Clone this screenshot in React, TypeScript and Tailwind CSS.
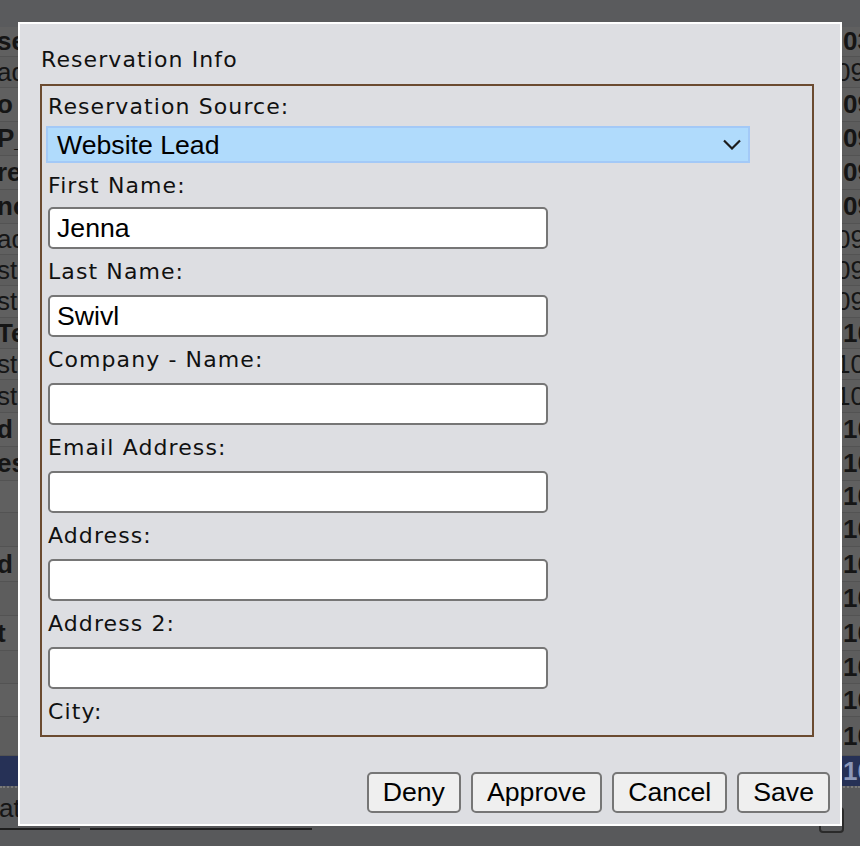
import React from "react";

type Row = { h: string; l: string; r: string; b: boolean };

const rows: Row[] = [
  { h: "h-[30px]", l: "se", r: "03/28/2025", b: true },
  { h: "h-[31px]", l: "ade", r: "09/04/2025", b: false },
  { h: "h-[34px]", l: "o", r: "09/12/2025", b: true },
  { h: "h-[34px]", l: "P_", r: "09/12/2025", b: true },
  { h: "h-[34px]", l: "re", r: "09/15/2025", b: true },
  { h: "h-[34px]", l: "nc", r: "09/18/2025", b: true },
  { h: "h-[31px]", l: "ad", r: "09/24/2025", b: false },
  { h: "h-[31px]", l: "st1", r: "09/24/2025", b: false },
  { h: "h-[32px]", l: "st1", r: "09/29/2025", b: false },
  { h: "h-[31px]", l: "Te", r: "10/01/2025", b: true },
  { h: "h-[31px]", l: "st1", r: "10/04/2025", b: false },
  { h: "h-[33px]", l: "st1", r: "10/04/2025", b: false },
  { h: "h-[34px]", l: "d", r: "10/06/2025", b: true },
  { h: "h-[34px]", l: "es", r: "10/07/2025", b: true },
  { h: "h-[32px]", l: "", r: "10/08/2025", b: true },
  { h: "h-[34px]", l: "", r: "10/09/2025", b: true },
  { h: "h-[35px]", l: "d", r: "10/10/2025", b: true },
  { h: "h-[34px]", l: "", r: "10/13/2025", b: true },
  { h: "h-[35px]", l: "t", r: "10/14/2025", b: true },
  { h: "h-[33px]", l: "", r: "10/15/2025", b: true },
  { h: "h-[33px]", l: "", r: "10/16/2025", b: true },
  { h: "h-[39px]", l: "", r: "10/17/2025", b: true },
];

const fields = [
  { label: "First Name:", value: "Jenna" },
  { label: "Last Name:", value: "Swivl" },
  { label: "Company - Name:", value: "" },
  { label: "Email Address:", value: "" },
  { label: "Address:", value: "" },
  { label: "Address 2:", value: "" },
  { label: "City:", value: "" },
];

function Background() {
  return (
    <div className="flex flex-col font-['Liberation_Sans',Arial,sans-serif] text-[26px] text-[#151515]">
      <div className="h-[27px]" />
      {rows.map((row, i) => (
        <div
          key={i}
          className={`${row.h} flex items-center border-b border-[#535353] ${
            i % 2 ? "bg-[#5d5d5d]" : "bg-[#606060]"
          } ${row.b ? "font-bold" : "font-normal"}`}
        >
          <div className="w-[40px] overflow-hidden whitespace-nowrap">
            <span className="block -ml-[3px]">{row.l}</span>
          </div>
          <div className="flex-1" />
          <div className="w-[26px] overflow-hidden whitespace-nowrap">
            <span className={`block ${row.b ? "pl-[9px]" : "pl-[2px]"}`}>{row.r}</span>
          </div>
        </div>
      ))}
      {/* selected row */}
      <div className="h-[30px] flex items-center bg-[#263156] text-[#8c97b8] font-bold">
        <div className="flex-1" />
        <div className="w-[26px] overflow-hidden whitespace-nowrap">
          <span className="block pl-[9px]">10/20/2025</span>
        </div>
      </div>
      <div className="border-t-2 border-dotted border-[#7a7a7a]" />
      <div className="relative h-[58px] bg-[#58595b]">
        <div className="flex items-end h-[40px] text-[#151515]">
          <span className="-ml-[1px]">at</span>
        </div>
        <div className="flex gap-[10px]">
          <div className="w-[80px] h-[2px] bg-[#1e1e1e]" />
          <div className="w-[222px] h-[2px] bg-[#1e1e1e]" />
        </div>
        <div className="absolute left-[819px] top-[19px] w-[25px] h-[26px] rounded-[4px] border-2 border-[#2a2a2a]" />
      </div>
    </div>
  );
}

function Chevron() {
  return (
    <svg width="18" height="11" viewBox="0 0 18 11" fill="none">
      <path d="M1 1.5 L9 9.5 L17 1.5" stroke="#1c1c1c" strokeWidth="2.2" />
    </svg>
  );
}

function Dialog() {
  return (
    <div className="absolute left-[18px] top-[22px] w-[824px] h-[804px] border-2 border-white bg-[#dddee2] flex flex-col font-['DejaVu_Sans',Verdana,sans-serif] text-[22px] tracking-[1.1px] text-[#111]">
      <div className="pl-[21px] pt-[23px] leading-[26px]">Reservation Info</div>
      <div className="ml-[20px] mt-[11px] w-[774px] h-[653px] border-2 border-[#6b4b30] overflow-hidden px-[4px] pt-[8px]">
        <div className="pl-[2px] leading-[26px]">Reservation Source:</div>
        <div className="mt-[6px] w-[704px] h-[37px] border-2 border-[#a3c9f7] bg-[#b0dbfc] flex items-center justify-between pl-[9px] pr-[7px] font-['Liberation_Sans',Arial,sans-serif] text-[26.67px] tracking-normal text-black">
          <span>Website Lead</span>
          <Chevron />
        </div>
        {fields.map((f, i) => (
          <div key={f.label} className="pt-[10px]">
            <div className="pl-[2px] leading-[26px]">{f.label}</div>
            <input
              readOnly
              defaultValue={f.value}
              className={`block ml-[2px] ${i === 0 ? "mt-[8px]" : "mt-[10px]"} w-[500px] h-[42px] rounded-[5px] border-2 border-[#767676] bg-white px-[7px] font-['Liberation_Sans',Arial,sans-serif] text-[26.67px] tracking-normal text-black outline-none`}
            />
          </div>
        ))}
      </div>
      <div className="flex-1" />
      <div className="flex justify-end gap-[10px] pr-[10px] pb-[11px] font-['Liberation_Sans',Arial,sans-serif] text-[26.67px] tracking-normal text-black">
        {["Deny", "Approve", "Cancel", "Save"].map((b) => (
          <button
            key={b}
            className="h-[41px] px-[14px] rounded-[5px] border-2 border-[#767676] bg-[#efefef] leading-none tracking-normal"
          >
            {b}
          </button>
        ))}
      </div>
    </div>
  );
}

export default function App() {
  return (
    <div className="relative w-[860px] h-[846px] overflow-hidden bg-[#5a5b5d]">
      <Background />
      <Dialog />
    </div>
  );
}
